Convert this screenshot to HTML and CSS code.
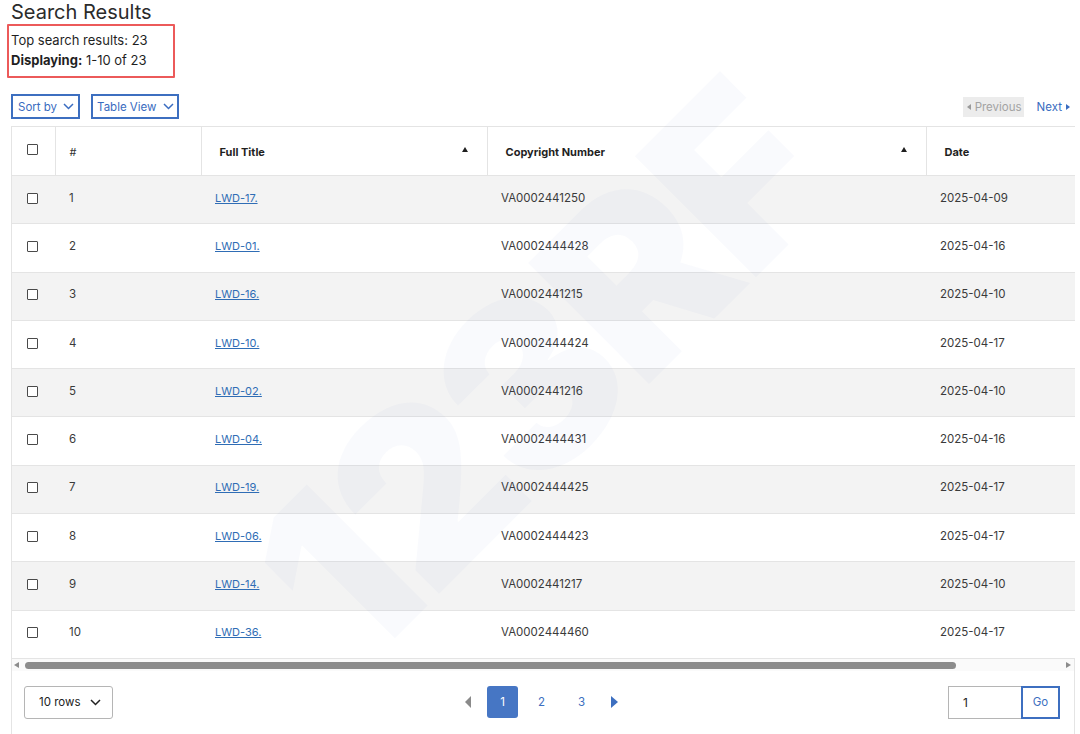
FILE: index.html
```html
<!DOCTYPE html>
<html>
<head>
<meta charset="utf-8">
<link rel="stylesheet" href="styles.css">
</head>
<body>
<div class="page">
  <h1 class="title">Search Results</h1>
  <div class="summary">
    <p>Top search results: 23</p>
    <p><b>Displaying:</b> 1-10 of 23</p>
  </div>
  <div class="toolbar">
    <div class="tools">
      <button class="outline">Sort by <svg width="11" height="7" viewBox="0 0 11 7"><polyline points="1,1 5.5,5.5 10,1" fill="none" stroke="currentColor" stroke-width="1.5"/></svg></button>
      <button class="outline">Table View <svg width="11" height="7" viewBox="0 0 11 7"><polyline points="1,1 5.5,5.5 10,1" fill="none" stroke="currentColor" stroke-width="1.5"/></svg></button>
    </div>
    <div class="nav">
      <span class="prev"><span class="tri-l small"></span>Previous</span>
      <span class="next">Next<span class="tri-r small"></span></span>
    </div>
  </div>

  <div class="grid">
    <div class="clip">
      <table>
        <colgroup>
          <col class="c-check"><col class="c-num"><col class="c-title"><col class="c-copy"><col class="c-date">
        </colgroup>
        <thead>
          <tr>
            <th class="chk"><span class="box"></span></th>
            <th class="hnum">#</th>
            <th><div class="th-in"><span>Full Title</span><span class="sort"></span></div></th>
            <th><div class="th-in"><span>Copyright Number</span><span class="sort"></span></div></th>
            <th>Date</th>
          </tr>
        </thead>
        <tbody>
          <tr><td class="chk"><span class="box"></span></td><td>1</td><td><a href="#">LWD-17.</a></td><td>VA0002441250</td><td>2025-04-09</td></tr>
          <tr><td class="chk"><span class="box"></span></td><td>2</td><td><a href="#">LWD-01.</a></td><td>VA0002444428</td><td>2025-04-16</td></tr>
          <tr><td class="chk"><span class="box"></span></td><td>3</td><td><a href="#">LWD-16.</a></td><td>VA0002441215</td><td>2025-04-10</td></tr>
          <tr><td class="chk"><span class="box"></span></td><td>4</td><td><a href="#">LWD-10.</a></td><td>VA0002444424</td><td>2025-04-17</td></tr>
          <tr><td class="chk"><span class="box"></span></td><td>5</td><td><a href="#">LWD-02.</a></td><td>VA0002441216</td><td>2025-04-10</td></tr>
          <tr><td class="chk"><span class="box"></span></td><td>6</td><td><a href="#">LWD-04.</a></td><td>VA0002444431</td><td>2025-04-16</td></tr>
          <tr><td class="chk"><span class="box"></span></td><td>7</td><td><a href="#">LWD-19.</a></td><td>VA0002444425</td><td>2025-04-17</td></tr>
          <tr><td class="chk"><span class="box"></span></td><td>8</td><td><a href="#">LWD-06.</a></td><td>VA0002444423</td><td>2025-04-17</td></tr>
          <tr><td class="chk"><span class="box"></span></td><td>9</td><td><a href="#">LWD-14.</a></td><td>VA0002441217</td><td>2025-04-10</td></tr>
          <tr><td class="chk"><span class="box"></span></td><td>10</td><td><a href="#">LWD-36.</a></td><td>VA0002444460</td><td>2025-04-17</td></tr>
        </tbody>
      </table>
    </div>
    <div class="hscroll">
      <span class="sa-l"></span>
      <span class="thumb"></span>
      <span class="sa-r"></span>
    </div>
    <div class="footer">
      <button class="rows">10 rows <svg width="11" height="7" viewBox="0 0 11 7"><polyline points="1,1 5.5,5.5 10,1" fill="none" stroke="currentColor" stroke-width="1.5"/></svg></button>
      <div class="pager">
        <span class="tri-l big grey"></span>
        <span class="pg active">1</span>
        <span class="pg">2</span>
        <span class="pg">3</span>
        <span class="tri-r big"></span>
      </div>
      <div class="goto">
        <span class="goin">1</span>
        <button class="gobtn">Go</button>
      </div>
    </div>
  </div>

  <div class="watermark">123RF</div>
</div>
</body>
</html>
```

FILE: styles.css
```css
* { box-sizing: border-box; }
html, body { margin: 0; padding: 0; background: #fff; }
body { font-family: Inter, "Liberation Sans", Arial, sans-serif; color: #333; overflow: hidden; }

.page { position: relative; width: 1080px; height: 734px; padding: 0 5px 0 11px; overflow: hidden; }

.title { margin: 0; font-size: 20px; line-height: 24px; font-weight: 400; color: #2b2b2b; }

.summary { margin: 0 0 0 -4px; width: 168px; height: 54px; border: 2px solid #ec5a5a; border-radius: 1px; padding: 4px 2px 0 2px; }
.summary p { margin: 0; font-size: 13px; line-height: 20px; color: #1f1f1f; }
.summary b { font-weight: 700; }

.toolbar { display: flex; justify-content: space-between; align-items: center; margin-top: 16px; height: 25px; }
.tools { display: flex; gap: 11px; }
.outline { display: flex; align-items: center; gap: 6px; height: 25px; padding: 0 4px 0 5px; background: #fff; border: 2px solid #3d6fc0; color: #3a6cc0; font-family: inherit; font-size: 11.5px; cursor: pointer; }
.outline + .outline { padding: 0 3px 0 4px; }
.outline svg { color: #3a6cc0; }

.nav { display: flex; align-items: center; gap: 13px; font-size: 11.5px; margin-right: 5px; }
.prev { display: flex; align-items: center; gap: 4px; background: #ececec; color: #a3a3a3; height: 20px; padding: 0 2px 0 4px; }
.next { display: flex; align-items: center; gap: 4px; color: #3a6cc0; }

.tri-l, .tri-r { display: inline-block; width: 0; height: 0; }
.tri-l.small { border-top: 3.5px solid transparent; border-bottom: 3.5px solid transparent; border-right: 4px solid #9a9a9a; }
.tri-r.small { border-top: 3.5px solid transparent; border-bottom: 3.5px solid transparent; border-left: 4px solid #3a6cc0; }
.tri-l.big { border-top: 6px solid transparent; border-bottom: 6px solid transparent; border-right: 6px solid #8a8a8a; }
.tri-r.big { border-top: 6px solid transparent; border-bottom: 6px solid transparent; border-left: 7px solid #3d6fc0; }

.grid { margin-top: 7px; width: 1064px; }
.clip { width: 1064px; overflow: hidden; border-left: 1px solid #e4e4e4; border-top: 1px solid #e4e4e4; }
table { width: 1250px; table-layout: fixed; border-collapse: collapse; }
.c-check { width: 43px; }
.c-num { width: 146px; }
.c-title { width: 286px; }
.c-copy { width: 439px; }
.c-date { width: 336px; }

th { height: 48.5px; text-align: left; font-size: 11px; font-weight: 700; color: #1f1f1f; padding: 0 19px 0 18px; border-right: 1px solid #e4e4e4; border-bottom: 1px solid #e4e4e4; vertical-align: middle; padding-top: 2px; }
th.hnum { font-weight: 400; padding-left: 14px; color: #333; }
th.chk { vertical-align: top; padding: 17px 0 0 0; }
.th-in { display: flex; justify-content: space-between; align-items: center; }
.sort { width: 0; height: 0; border-left: 3.5px solid transparent; border-right: 3.5px solid transparent; border-bottom: 5px solid #1f1f1f; margin-top: -6px; margin-right: 0; }

td { height: 48.3px; font-size: 11.5px; color: #3a3a3a; padding: 0 13px 0 14px; border-bottom: 1px solid #e4e4e4; vertical-align: middle; padding-bottom: 4px; }
tbody tr:nth-child(odd) td { background: #f3f3f3; }
td.chk, th.chk { text-align: left; padding-left: 15px; padding-right: 0; }
td.chk { padding-bottom: 3px; }
.box { display: block; width: 11px; height: 11px; border: 1.5px solid #4a4a4a; background: #fff; border-radius: 1px; }
td a { color: #2f6db5; text-decoration: underline; font-size: 11px; }

.hscroll { position: relative; height: 12px; border-left: 1px solid #e4e4e4; border-right: 1px solid #e4e4e4; background: #fafafa; }
.thumb { position: absolute; left: 13px; top: 3px; width: 931px; height: 7px; border-radius: 4px; background: #8c8c8c; }
.sa-l { position: absolute; left: 2px; top: 3px; width: 0; height: 0; border-top: 3.5px solid transparent; border-bottom: 3.5px solid transparent; border-right: 5px solid #8c8c8c; }
.sa-r { position: absolute; right: 3px; top: 3px; width: 0; height: 0; border-top: 3.5px solid transparent; border-bottom: 3.5px solid transparent; border-left: 5px solid #8c8c8c; }

.footer { height: 66px; border-left: 1px solid #e4e4e4; border-right: 1px solid #e4e4e4; display: flex; align-items: flex-start; justify-content: space-between; padding: 15px 14px 0 12px; }
.rows { display: flex; align-items: center; gap: 10px; width: 89px; height: 33px; padding: 0 0 0 14px; background: #fff; border: 1px solid #b5b5b5; border-radius: 3px; font-family: inherit; font-size: 11.5px; color: #222; }
.rows svg { color: #222; }

.pager { display: flex; align-items: center; height: 33px; margin-left: 22px; }
.pager .tri-l { margin-right: 16px; }
.pager .tri-r { margin-left: 5px; }
.pg { display: flex; align-items: center; justify-content: center; width: 31px; height: 32px; font-size: 11.5px; color: #3d6fc0; margin-right: 9px; }
.pg.active { background: #4676c4; color: #fff; border-radius: 3px; margin-right: 8px; }

.goto { display: flex; height: 33px; }
.goin { display: flex; align-items: center; width: 73px; height: 33px; border: 1px solid #b5b5b5; border-right: none; padding-left: 14px; font-size: 12px; color: #222; }
.gobtn { width: 39px; height: 33px; background: #fff; border: 2px solid #3d6fc0; color: #3d6fc0; font-family: inherit; font-size: 11.5px; padding: 0; }

.watermark { position: absolute; left: 540px; top: 372px; transform: translate(-50%, -50%) rotate(-45deg); font-size: 235px; font-weight: 900; letter-spacing: -6px; color: rgba(90, 125, 185, 0.035); pointer-events: none; white-space: nowrap; line-height: 1; }
```
